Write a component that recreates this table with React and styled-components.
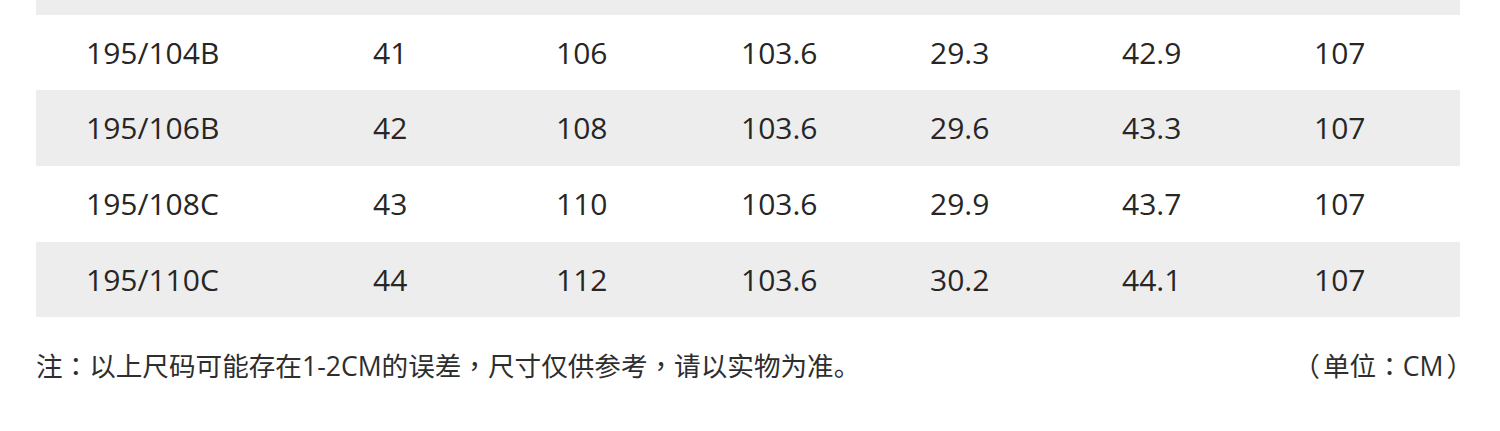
import React from "react";
import styled, { createGlobalStyle } from "styled-components";

const Global = createGlobalStyle`
  html, body { margin: 0; padding: 0; background: #ffffff; }
  body { font-family: "Open Sans", "Noto Sans CJK SC", sans-serif; }
`;

const Page = styled.div`
  width: 1500px;
  height: 431px;
  overflow: hidden;
  background: #fff;
`;

const Table = styled.div`
  margin-left: 36px;
  width: 1424px;
  display: flex;
  flex-direction: column;
`;

const Row = styled.div`
  display: grid;
  grid-template-columns: 287px 183px 185px 189px 192px 192px 1fr;
  align-items: center;
  padding-left: 50px;
  height: ${(p) => p.$height}px;
  background: ${(p) => (p.$striped ? "#ededed" : "#ffffff")};
  overflow: hidden;
`;

const Cell = styled.div`
  font-family: "Open Sans", "Noto Sans CJK SC", sans-serif;
  font-size: 30px;
  color: #262626;
  line-height: 1;
  white-space: nowrap;
`;

const NoteBar = styled.div`
  margin: 28px 24px 0 36px;
  display: flex;
  justify-content: space-between;
  align-items: center;
  line-height: 40px;
`;

const Note = styled.div`
  font-family: "Open Sans", "Noto Sans CJK SC", sans-serif;
  font-size: 26.6px;
  color: #2e2e2e;
  white-space: nowrap;
`;

const Punct = styled.span`
  font-family: "Noto Sans CJK TC", "Noto Sans CJK SC", sans-serif;
  padding: 0 ${(p) => p.$pad || 0}px;
`;

const rows = [
  ["195/104B", "41", "106", "103.6", "29.3", "42.9", "107"],
  ["195/106B", "42", "108", "103.6", "29.6", "43.3", "107"],
  ["195/108C", "43", "110", "103.6", "29.9", "43.7", "107"],
  ["195/110C", "44", "112", "103.6", "30.2", "44.1", "107"],
];

const heights = [75, 76, 76, 75];

export default function App() {
  return (
    <Page>
      <Global />
      <Table>
        <Row $striped $height={15} />
        {rows.map((r, i) => (
          <Row key={r[0]} $striped={i % 2 === 1} $height={heights[i]}>
            {r.map((c, j) => (
              <Cell key={j}>{c}</Cell>
            ))}
          </Row>
        ))}
      </Table>
      <NoteBar>
        <Note>
          注<Punct>：</Punct>以上尺码可能存在1-2CM的误差<Punct>，</Punct>尺寸仅供参考
          <Punct>，</Punct>请以实物为准。
        </Note>
        <Note>
          <Punct $pad={3}>（</Punct>单位<Punct>：</Punct>CM<Punct $pad={3}>）</Punct>
        </Note>
      </NoteBar>
    </Page>
  );
}
